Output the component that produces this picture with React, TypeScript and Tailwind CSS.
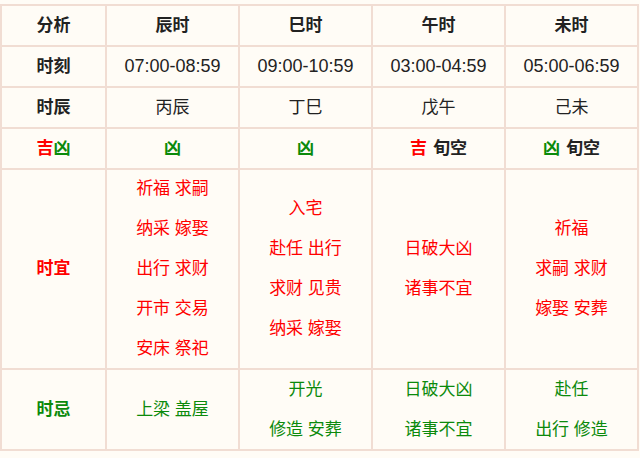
const RED = 'text-[#ff0000]'
const GREEN = 'text-[#0b8a0b]'

const hours = [
  { name: '辰时', time: '07:00-08:59', gz: '丙辰', ji: [['凶', 'g']], yi: ['祈福 求嗣', '纳采 嫁娶', '出行 求财', '开市 交易', '安床 祭祀'], ju: ['上梁 盖屋'] },
  { name: '巳时', time: '09:00-10:59', gz: '丁巳', ji: [['凶', 'g']], yi: ['入宅', '赴任 出行', '求财 见贵', '纳采 嫁娶'], ju: ['开光', '修造 安葬'] },
  { name: '午时', time: '03:00-04:59', gz: '戊午', ji: [['吉', 'r'], ['旬空', 'd']], yi: ['日破大凶', '诸事不宜'], ju: ['日破大凶', '诸事不宜'] },
  { name: '未时', time: '05:00-06:59', gz: '己未', ji: [['凶', 'g'], ['旬空', 'd']], yi: ['祈福', '求嗣 求财', '嫁娶 安葬'], ju: ['赴任', '出行 修造'] },
]

const cell = 'flex flex-col items-center justify-center border-r-2 border-b-2 border-[#f1ddd3] text-center'

export default function App() {
  return (
    <div className="w-[640px] h-[458px] bg-[#fffcf6] overflow-hidden pt-[4px] text-[17px] text-[#222]" style={{ fontFamily: 'Arial, "Liberation Sans", "Noto Sans CJK SC", sans-serif' }}>
      <div className="grid grid-cols-[105px_133px_133px_133px_133px] grid-rows-[41px_41px_41px_41px_200px_81px] w-[639px] border-t-2 border-l-2 border-[#f1ddd3]">
        <div className={`${cell} font-bold`}>分析</div>
        {hours.map(h => <div key={h.name} className={`${cell} font-bold`}>{h.name}</div>)}

        <div className={`${cell} font-bold`}>时刻</div>
        {hours.map(h => <div key={h.name} className={`${cell} text-[18px]`}>{h.time}</div>)}

        <div className={`${cell} font-bold`}>时辰</div>
        {hours.map(h => <div key={h.name} className={cell}>{h.gz}</div>)}

        <div className={`${cell} font-bold`}>
          <span><span className={RED}>吉</span><span className={GREEN}>凶</span></span>
        </div>
        {hours.map(h => (
          <div key={h.name} className={`${cell} font-bold`}>
            <span className="flex gap-[6px]">
              {h.ji.map(([t, c]) => (
                <span key={t} className={c === 'r' ? RED : c === 'g' ? GREEN : 'text-[#222]'}>{t}</span>
              ))}
            </span>
          </div>
        ))}

        <div className={`${cell} font-bold ${RED}`}>时宜</div>
        {hours.map(h => (
          <div key={h.name} className={`${cell} ${RED}`}>
            {h.yi.map(l => <p key={l} className="leading-[40px] whitespace-pre">{l}</p>)}
          </div>
        ))}

        <div className={`${cell} font-bold ${GREEN}`}>时忌</div>
        {hours.map(h => (
          <div key={h.name} className={`${cell} ${GREEN}`}>
            {h.ju.map(l => <p key={l} className="leading-[40px] whitespace-pre">{l}</p>)}
          </div>
        ))}
      </div>
    </div>
  )
}
